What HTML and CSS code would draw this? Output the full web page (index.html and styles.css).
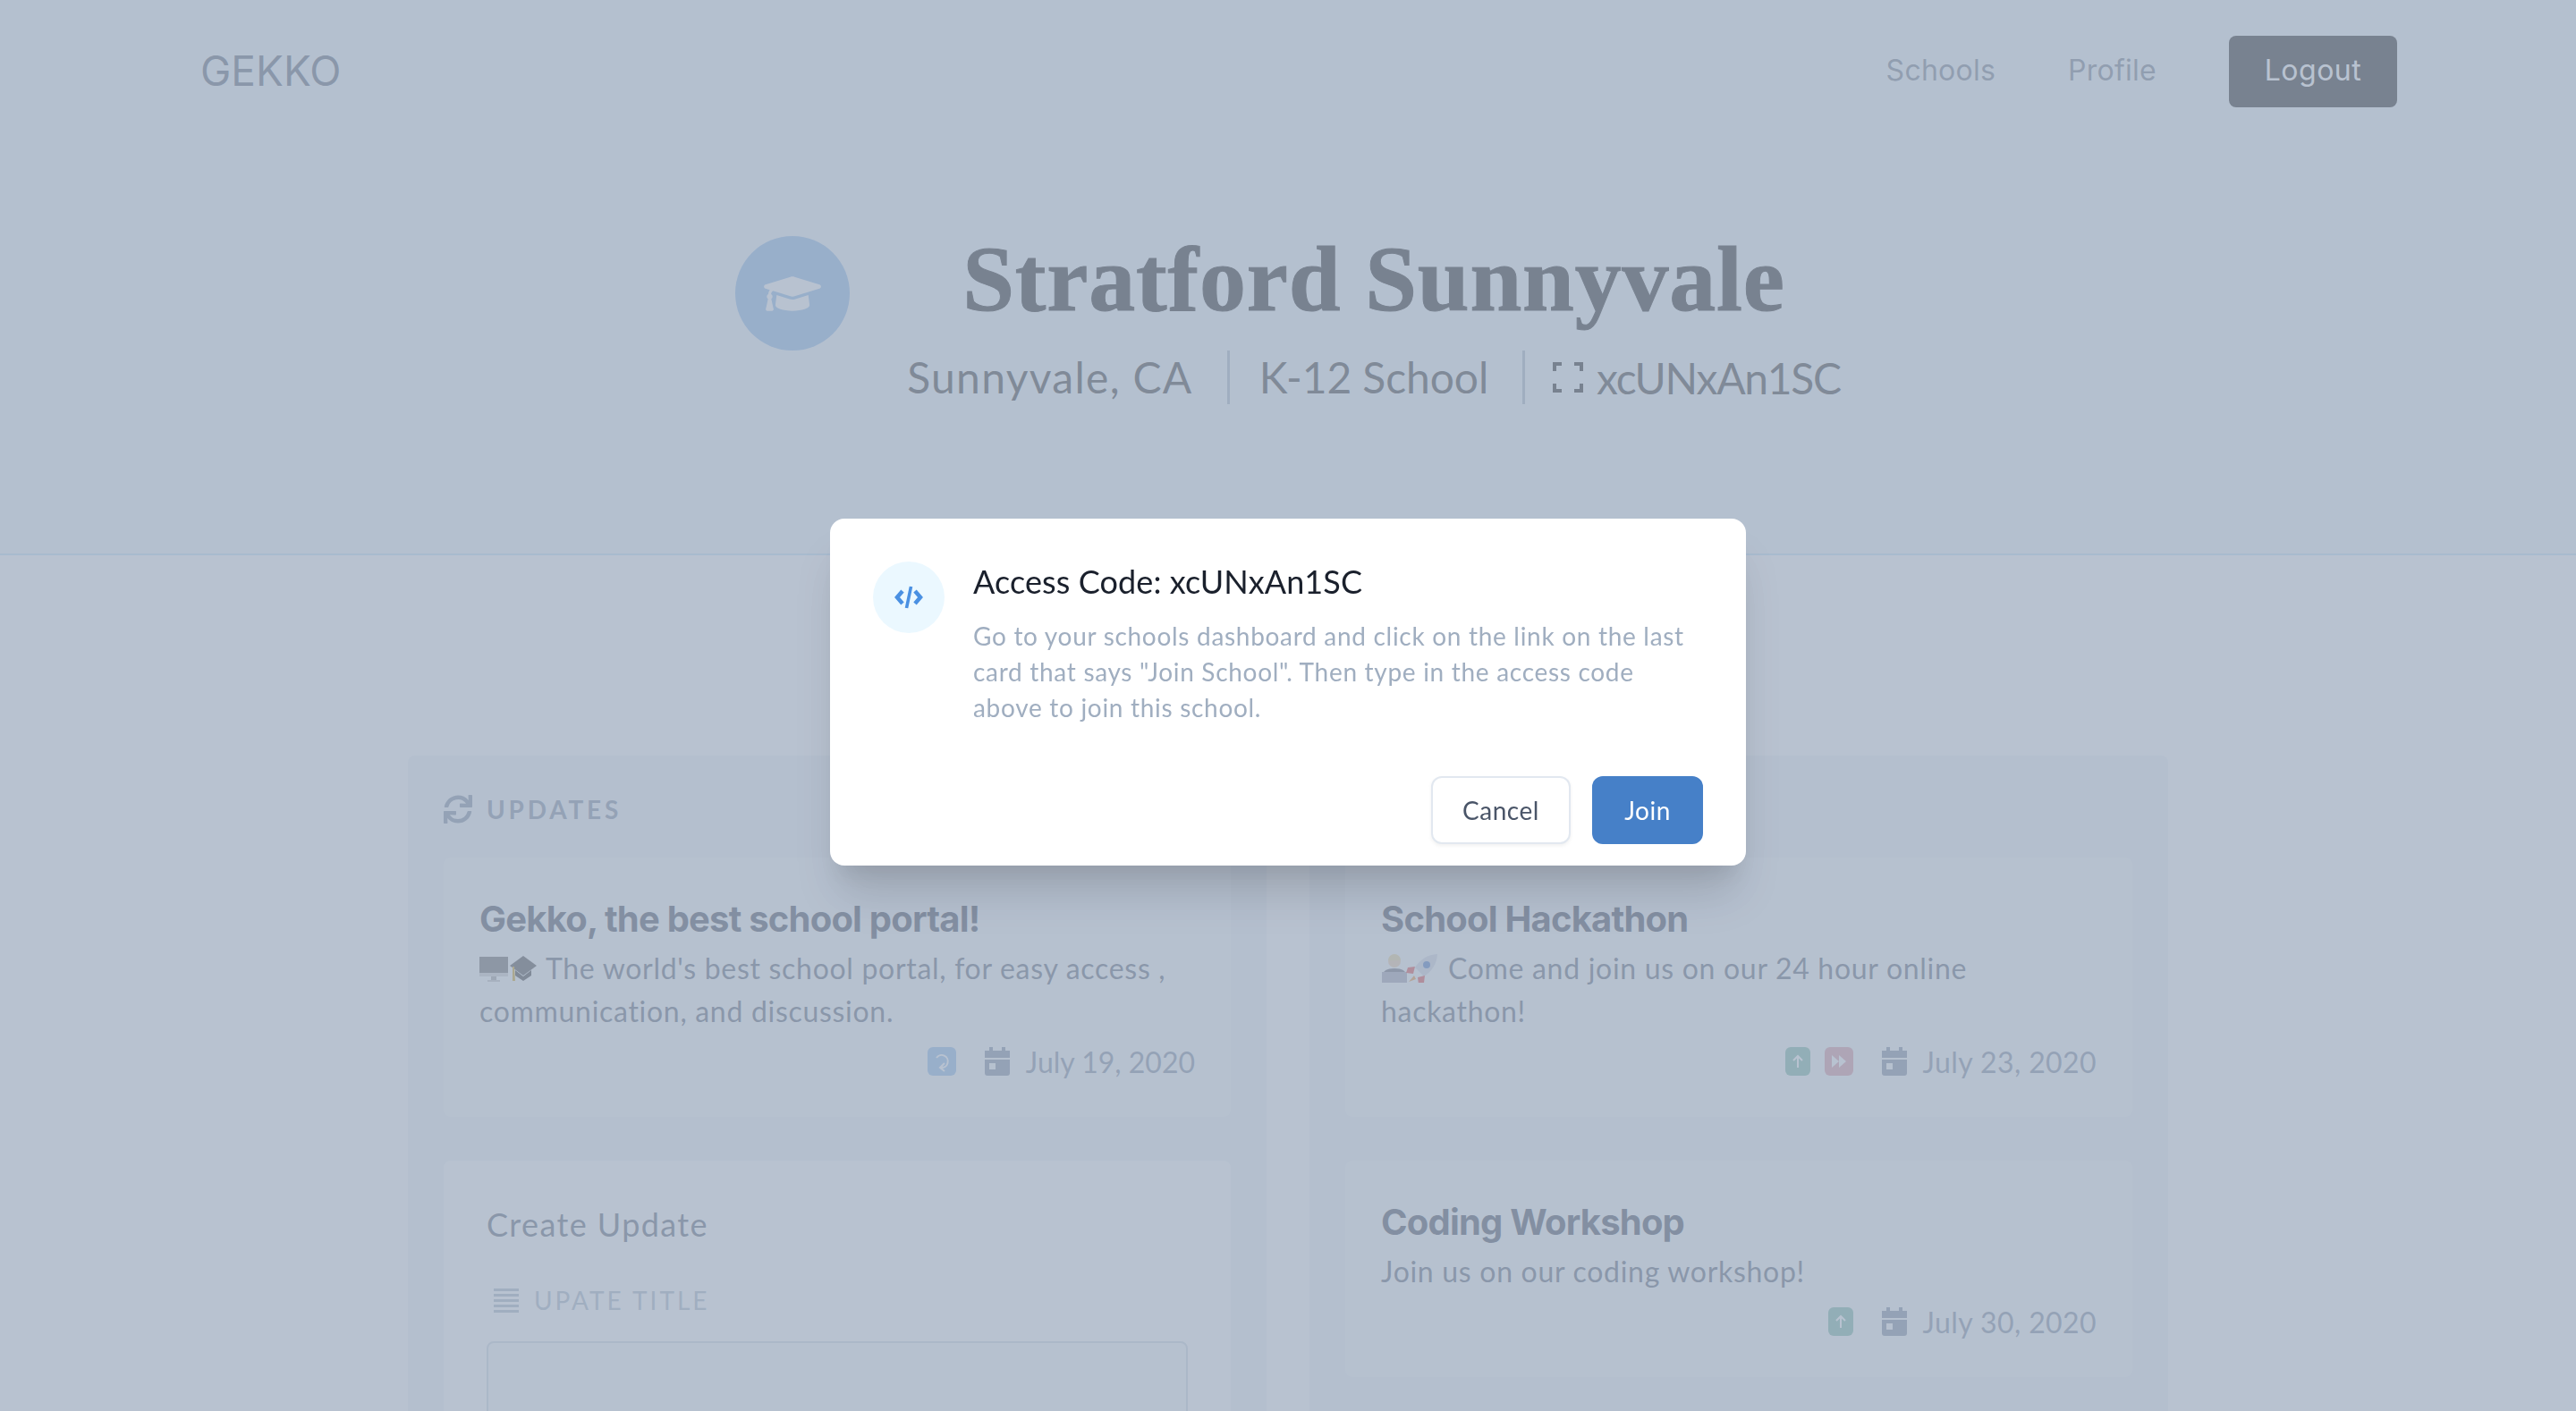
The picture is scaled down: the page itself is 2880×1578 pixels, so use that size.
FILE: index.html
```html
<!DOCTYPE html>
<html>
<head>
    <meta charset="utf-8">
    <title>Gekko</title>
    <link rel="stylesheet" href="styles.css">
</head>

<body>
    <header class="top">
        <nav class="nav">
            <a class="logo">GEKKO</a>
            <div class="links">
                <a class="lnk">Schools</a>
                <a class="lnk">Profile</a>
                <a class="logout">Logout</a>
            </div>
        </nav>
        <div class="hero">
            <div class="circle">
                <svg viewBox="0 0 640 512" width="64" height="51"><path fill="#fff" d="M622.34 153.2L343.4 67.5c-15.2-4.67-31.6-4.67-46.79 0L17.66 153.2c-23.54 7.23-23.54 38.36 0 45.59l48.63 14.94c-10.67 13.19-17.23 29.28-17.88 46.9C38.78 266.15 32 276.11 32 288c0 10.78 5.68 19.85 13.86 25.65L20.33 428.53C18.11 438.52 25.71 448 35.94 448h56.11c10.24 0 17.84-9.48 15.62-19.47L82.14 313.65C90.32 307.85 96 298.78 96 288c0-11.57-6.47-21.25-15.66-26.87.76-15.02 8.44-28.3 20.69-36.72L296.6 284.5c9.06 2.78 26.44 6.25 46.79 0l278.95-85.7c23.55-7.24 23.55-38.36 0-45.6zM352.79 315.09c-28.53 8.76-52.84 3.92-65.59 0l-145.02-44.55L128 384c0 35.35 85.96 64 192 64s192-28.65 192-64l-14.18-113.47-145.03 44.56z"/></svg>
            </div>
            <div class="hero-txt">
                <h1>Stratford Sunnyvale</h1>
                <div class="sub">
                    <span class="sub-a">Sunnyvale, CA</span>
                    <span class="sub-b">K-12 School</span>
                    <span class="sub-c">
                        <svg viewBox="0 0 34 34" width="34" height="34" fill="none" stroke="#000" stroke-width="4"><path d="M2 10V2h8M24 2h8v8M32 24v8h-8M10 32H2v-8"/></svg>
                        xcUNxAn1SC
                    </span>
                </div>
            </div>
        </div>
    </header>

    <main class="cols">
        <section class="panel">
            <h3 class="head">
                <svg viewBox="0 0 512 512" width="32" height="32"><path fill="currentColor" d="M440.65 12.57l4 82.77A247.16 247.16 0 0 0 255.83 8C134.73 8 33.91 94.92 12.29 209.82A12 12 0 0 0 24.09 224h49.05a12 12 0 0 0 11.67-9.26 175.91 175.91 0 0 1 317-56.94l-101.46-4.86a12 12 0 0 0-12.57 12v47.41a12 12 0 0 0 12 12H500a12 12 0 0 0 12-12V12a12 12 0 0 0-12-12h-47.37a12 12 0 0 0-11.98 12.57zM255.83 432a175.61 175.61 0 0 1-146-77.8l101.8 4.87a12 12 0 0 0 12.57-12v-47.4a12 12 0 0 0-12-12H12a12 12 0 0 0-12 12V500a12 12 0 0 0 12 12h47.35a12 12 0 0 0 12-12.6l-4.15-82.57A247.17 247.17 0 0 0 255.83 504c121.11 0 221.93-86.92 243.55-201.82a12 12 0 0 0-11.8-14.18h-49.05a12 12 0 0 0-11.67 9.26A175.86 175.86 0 0 1 255.83 432z"/></svg>
                UPDATES
            </h3>
            <article class="card">
                <h2>Gekko, the best school portal!</h2>
                <p>
                    <svg class="emo" viewBox="0 0 64 32" width="64" height="32">
                        <rect x="0" y="3" width="32" height="21" fill="#555"/><rect x="0" y="21" width="32" height="4" fill="#ccc"/><rect x="13" y="25" width="6" height="4" fill="#999"/><rect x="9" y="29" width="14" height="2" fill="#bbb"/>
                        <path d="M49 2L64 13 49 24 34 13z" fill="#333"/><path d="M40 18l9 7 9-7v6l-9 6-9-6z" fill="#222"/><path d="M37 14v16h3l-1-16z" fill="#c90"/>
                    </svg>
                    The world's best school portal, for easy access ,<br>communication, and discussion.
                </p>
                <div class="meta">
                    <span class="chip blue">
                        <svg viewBox="0 0 20 24" width="20" height="24" fill="none" stroke="#fff" stroke-width="2"><path d="M4 8a7 7 0 1 1 5 11M13 14l-5 5 5 4"/></svg>
                    </span>
                    <svg class="cal" viewBox="0 0 28 32" width="28" height="32"><path fill="#718096" fill-rule="evenodd" d="M5 0h4v4h10V0h4v4h5v8H0V4h5zM0 14h28v15a3 3 0 0 1-3 3H3a3 3 0 0 1-3-3zM5 18v7h7v-7z"/></svg>
                    <span class="date">July 19, 2020</span>
                </div>
            </article>
            <form class="card create">
                <h4>Create Update</h4>
                <label class="lbl">
                    <svg viewBox="0 0 28 28" width="28" height="28" fill="currentColor"><path d="M0 1h28v3H0zM0 7h28v3H0zM0 13h28v3H0zM0 19h28v3H0zM0 25h28v3H0z"/></svg>
                    UPATE TITLE
                </label>
                <div class="inp"></div>
            </form>
        </section>

        <section class="panel">
            <div class="head-gap"></div>
            <article class="card">
                <h2>School Hackathon</h2>
                <p>
                    <svg class="emo" viewBox="0 0 64 32" width="64" height="32">
                        <circle cx="15" cy="8" r="7" fill="#f0c8a0"/><path d="M8 7a7 7 0 0 1 14 0z" fill="#e8d08a"/><path d="M2 32v-8q0-8 13-8t13 8v8z" fill="#556"/><rect x="1" y="20" width="28" height="12" fill="#99a"/>
                        <path d="M63 0q-16 1-25 15l10 10q14-9 15-25z" fill="#cdd3e0"/><path d="M38 14l-8 1-2 6 8 1zM49 24l-1 8-6 2-1-8z" fill="#d33"/><path d="M37 24l-6 7 8-3z" fill="#e82"/><circle cx="51" cy="12" r="4" fill="#36b"/>
                    </svg>
                    Come and join us on our 24 hour online<br>hackathon!
                </p>
                <div class="meta">
                    <span class="chip green narrow">
                        <svg viewBox="0 0 16 16" width="16" height="16" fill="none" stroke="#fff" stroke-width="2"><path d="M8 15V2M3 7l5-5 5 5"/></svg>
                    </span>
                    <span class="chip red">
                        <svg viewBox="0 0 18 16" width="18" height="16" fill="#fff"><path d="M1 1l8 7-8 7zM9 1l8 7-8 7z"/></svg>
                    </span>
                    <svg class="cal" viewBox="0 0 28 32" width="28" height="32"><path fill="#718096" fill-rule="evenodd" d="M5 0h4v4h10V0h4v4h5v8H0V4h5zM0 14h28v15a3 3 0 0 1-3 3H3a3 3 0 0 1-3-3zM5 18v7h7v-7z"/></svg>
                    <span class="date wide">July 23, 2020</span>
                </div>
            </article>
            <article class="card">
                <h2>Coding Workshop</h2>
                <p>Join us on our coding workshop!</p>
                <div class="meta">
                    <span class="chip green narrow">
                        <svg viewBox="0 0 16 16" width="16" height="16" fill="none" stroke="#fff" stroke-width="2"><path d="M8 15V2M3 7l5-5 5 5"/></svg>
                    </span>
                    <svg class="cal" viewBox="0 0 28 32" width="28" height="32"><path fill="#718096" fill-rule="evenodd" d="M5 0h4v4h10V0h4v4h5v8H0V4h5zM0 14h28v15a3 3 0 0 1-3 3H3a3 3 0 0 1-3-3zM5 18v7h7v-7z"/></svg>
                    <span class="date wide">July 30, 2020</span>
                </div>
            </article>
        </section>
    </main>

    <div class="overlay">
        <div class="modal">
            <div class="modal-body">
                <div class="m-ico">
                    <svg viewBox="0 0 32 28" width="32" height="28" fill="none" stroke="#4a90e2" stroke-width="4.5"><path d="M9 7l-6 7 6 7M23 7l6 7-6 7"/><path stroke-width="3.6" d="M18.5 2l-5 24"/></svg>
                </div>
                <div class="m-txt">
                    <h3>Access Code: xcUNxAn1SC</h3>
                    <p>Go to your schools dashboard and click on the link on the last<br>card that says "Join School". Then type in the access code<br>above to join this school.</p>
                </div>
            </div>
            <div class="modal-foot">
                <button class="btn cancel">Cancel</button>
                <button class="btn join">Join</button>
            </div>
        </div>
    </div>
</body>

</html>
```

FILE: styles.css
```css
html, body {
    height: 100%;
}
body {
    margin: 0;
    overflow: hidden;
    background: #fff;
    font-family: "Lato", sans-serif;
    color: #000;
}
h1, h2, h3, h4, p {
    margin: 0;
    font-weight: normal;
}

.top {
    height: 619px;
    background: #f0f7fc;
    border-bottom: 2px solid #bee3f8;
}
.nav {
    display: flex;
    justify-content: space-between;
    align-items: center;
    padding: 40px 200px 0 224px;
    font-family: "Inter", sans-serif;
}
.logo {
    font-size: 46px;
    padding-bottom: 3px;
    color: #4a5568;
}
.links {
    display: flex;
    align-items: center;
}
.lnk {
    font-size: 32px;
    letter-spacing: .25px;
    padding-bottom: 3px;
    color: #667080;
    margin-right: 81px;
}
.logout {
    width: 188px;
    height: 77px;
    padding-bottom: 3px;
    display: flex;
    align-items: center;
    justify-content: center;
    font-size: 32px;
    letter-spacing: .5px;
    color: #fff;
    background: #000;
    border-radius: 8px;
}

.hero {
    display: flex;
    justify-content: center;
    gap: 64px;
    margin-top: 132px;
}
.circle {
    width: 128px;
    height: 128px;
    margin-top: 12px;
    border-radius: 50%;
    background: #7fb2e8;
    display: flex;
    align-items: center;
    justify-content: center;
}
.hero-txt {
    text-align: center;
}
.hero-txt h1 {
    font-family: "Liberation Serif", serif;
    font-weight: bold;
    font-size: 104px;
    line-height: 120px;
    letter-spacing: .8px;
    -webkit-text-stroke: 1px #000;
    margin-bottom: 20px;
}
.sub {
    display: flex;
    height: 60px;
    align-items: center;
    font-size: 48px;
    color: #222;
}
.sub-a, .sub-b {
    padding-right: 38px;
    margin-right: 33px;
    height: 60px;
    line-height: 60px;
    border-right: 3px solid #a0aec0;
}
.sub-a {
    letter-spacing: 1.3px;
}
.sub-b {
    margin-right: 31px;
    letter-spacing: -.1px;
}
.sub-c {
    display: flex;
    align-items: center;
    gap: 15px;
    letter-spacing: -1.3px;
}

.cols {
    display: flex;
    justify-content: center;
    gap: 48px;
    margin-top: 224px;
}
.panel {
    width: 960px;
    padding: 40px;
    box-sizing: border-box;
    background: #edf2f7;
    border-radius: 8px;
}
.head {
    display: flex;
    align-items: center;
    gap: 16px;
    height: 40px;
    margin-bottom: 34px;
    font-size: 28px;
    font-weight: bold;
    letter-spacing: 3.8px;
    color: #718096;
}
.head-gap {
    height: 74px;
}
.card {
    padding: 45px 40px 38px;
    margin-bottom: 49px;
    background: #f7fafc;
    border-radius: 8px;
}
.card h2 {
    font-family: "Inter", sans-serif;
    font-weight: bold;
    font-size: 40px;
    line-height: 48px;
    letter-spacing: -.8px;
    margin-bottom: 7px;
    color: #2d3748;
}
.card p {
    font-size: 32px;
    line-height: 48px;
    letter-spacing: .7px;
    color: #4a5568;
}
.emo {
    vertical-align: -4px;
    margin-right: 2px;
}
.meta {
    display: flex;
    justify-content: flex-end;
    align-items: center;
    height: 48px;
    margin-top: 8px;
}
.chip {
    width: 32px;
    height: 32px;
    margin-left: 12px;
    border-radius: 6px;
    display: flex;
    align-items: center;
    justify-content: center;
}
.narrow { width: 28px; }
.blue { background: #7fb2e8; }
.green { background: #68b09a; }
.red { background: #d88a98; margin-left: 16px; }
.cal {
    margin-left: 32px;
    margin-right: 18px;
}
.date {
    font-size: 32px;
    color: #718096;
}
.wide {
    letter-spacing: .4px;
}

.create {
    background: #fff;
    padding: 47px 48px;
}
.create h4 {
    font-size: 36px;
    line-height: 48px;
    letter-spacing: 1.4px;
    color: #4a5568;
    margin-bottom: 37px;
}
.lbl {
    display: flex;
    align-items: center;
    gap: 17px;
    padding-left: 8px;
    height: 48px;
    font-size: 28px;
    letter-spacing: 3px;
    color: #a0aec0;
}
.inp {
    height: 120px;
    margin-top: 22px;
    border: 2px solid #cbd5e0;
    border-radius: 8px;
    background: #f7fafc;
}

.overlay {
    position: fixed;
    inset: 0;
    background: rgba(160, 174, 192, .75);
    display: flex;
    align-items: center;
    justify-content: center;
    padding-bottom: 30px;
    box-sizing: border-box;
}
.modal {
    width: 1024px;
    height: 388px;
    background: #fff;
    border-radius: 16px;
    box-shadow: 0 40px 50px -10px rgba(0, 0, 0, .15), 0 20px 20px -10px rgba(0, 0, 0, .06);
    display: flex;
    flex-direction: column;
    justify-content: space-between;
}
.modal-body {
    display: flex;
    gap: 32px;
    padding: 48px 48px 0;
}
.m-ico {
    width: 80px;
    height: 80px;
    flex: none;
    border-radius: 50%;
    background: #ebf8ff;
    display: flex;
    align-items: center;
    justify-content: center;
}
.m-txt h3 {
    font-size: 36px;
    line-height: 48px;
    margin-top: -2px;
    letter-spacing: .1px;
    color: #1a202c;
}
.m-txt p {
    margin-top: 17px;
    font-size: 28px;
    line-height: 40px;
    letter-spacing: .7px;
    color: #a0aec0;
}
.modal-foot {
    display: flex;
    justify-content: flex-end;
    gap: 24px;
    padding: 0 48px 24px;
}
.btn {
    height: 76px;
    border-radius: 12px;
    font-family: inherit;
    font-size: 28px;
    letter-spacing: .5px;
}
.cancel {
    width: 156px;
    background: #fff;
    color: #4a5568;
    border: 2px solid #e2e8f0;
    box-shadow: 0 2px 4px rgba(0, 0, 0, .06);
}
.join {
    width: 124px;
    background: #4680c8;
    color: #fff;
    border: none;
}
```
